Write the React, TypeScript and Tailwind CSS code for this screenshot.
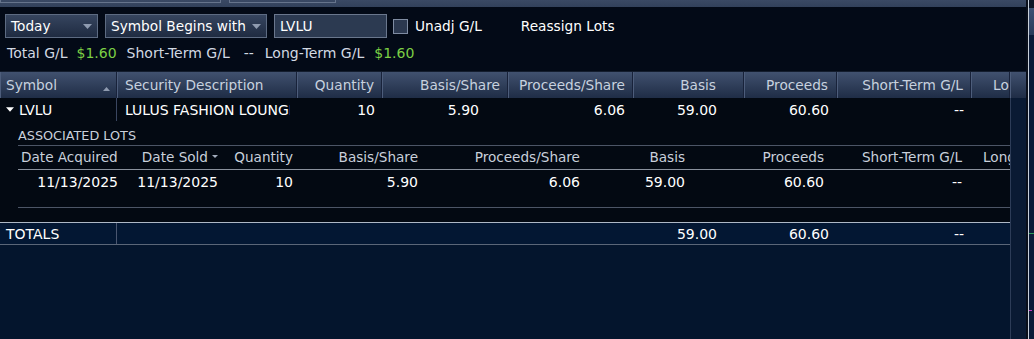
import React from "react";

type Col = { w: number; label: string; right?: boolean; pr?: number; pl?: number };

const mainCols: Col[] = [
  { w: 117, label: "Symbol", pl: 6 },
  { w: 180, label: "Security Description", pl: 8 },
  { w: 85, label: "Quantity", right: true, pr: 7 },
  { w: 126, label: "Basis/Share", right: true, pr: 7 },
  { w: 125, label: "Proceeds/Share", right: true, pr: 7 },
  { w: 111, label: "Basis", right: true, pr: 27 },
  { w: 93, label: "Proceeds", right: true, pr: 8 },
  { w: 134, label: "Short-Term G/L", right: true, pr: 7 },
  { w: 39, label: "Long-Term G/L", pl: 22 },
];

// main row values, with own right padding where the data sits off the header
const mainRow = [
  { w: 85, v: "10", pr: 7 },
  { w: 126, v: "5.90", pr: 29 },
  { w: 125, v: "6.06", pr: 8 },
  { w: 111, v: "59.00", pr: 27 },
  { w: 93, v: "60.60", pr: 8 },
  { w: 134, v: "--", pr: 7 },
];

// associated lots sub-table, starts at x 18
const lotCols = [
  { w: 107, label: "Date Acquired", value: "11/13/2025" },
  { w: 100, label: "Date Sold", value: "11/13/2025" },
  { w: 75, label: "Quantity", value: "10" },
  { w: 125, label: "Basis/Share", value: "5.90" },
  { w: 162, label: "Proceeds/Share", value: "6.06" },
  { w: 105, label: "Basis", value: "59.00" },
  { w: 139, label: "Proceeds", value: "60.60" },
  { w: 138, label: "Short-Term G/L", value: "--" },
];

function Caret({ className }: { className: string }) {
  return (
    <svg width="9" height="5" viewBox="0 0 9 5" className={className}>
      <path d="M0 0 L9 0 L4.5 5 Z" fill="currentColor" />
    </svg>
  );
}

function Dropdown({ label, w }: { label: string; w: number }) {
  return (
    <div
      className="h-[24px] flex items-center justify-between pl-[5px] pr-[5px] border border-[#5d6b82] bg-linear-to-b from-[#36455f] to-[#1f2b41] text-white"
      style={{ width: w }}
    >
      <span>{label}</span>
      <Caret className="text-[#8f9bb0]" />
    </div>
  );
}

export default function App() {
  return (
    <div
      className="w-[1034px] h-[339px] flex overflow-hidden bg-[#030a17] text-[14px] leading-[16px]"
      style={{ fontFamily: '"DejaVu Sans", Verdana, sans-serif' }}
    >
      <div className="w-[1026px] flex flex-col">
        {/* top toolbar strip */}
        <div className="h-[7px] flex gap-[8px] bg-linear-to-b from-[#3a4964] to-[#32415b]">
          <div className="w-[221px] h-[3px] border-x border-b border-[#66748c]" />
          <div className="w-[107px] h-[3px] border-x border-b border-[#66748c]" />
        </div>

        {/* filters */}
        <div className="mt-[7px] h-[24px] flex items-center pl-[5px] text-[13.7px]">
          <Dropdown label="Today" w={93} />
          <div className="w-[7px]" />
          <Dropdown label="Symbol Begins with" w={162} />
          <div className="ml-[7px] w-[113px] h-[24px] flex items-center pl-[5px] border border-[#6a778d] bg-[#2c3a51] text-white">
            LVLU
          </div>
          <div className="ml-[6px] w-[15px] h-[15px] border border-[#7f8ca2] bg-[#2b384f]" />
          <span className="ml-[7px] text-white">Unadj G/L</span>
          <span className="ml-[39px] text-white">Reassign Lots</span>
        </div>

        {/* summary */}
        <div className="mt-[6px] h-[18px] flex items-center pl-[7px] text-[#d2d9e3]">
          <span>Total G/L</span>
          <span className="ml-[9px] text-[#7ccf45]">$1.60</span>
          <span className="ml-[10px]">Short-Term G/L</span>
          <span className="ml-[14px]">--</span>
          <span className="ml-[11px]">Long-Term G/L</span>
          <span className="ml-[10px] text-[#7ccf45]">$1.60</span>
        </div>

        {/* header */}
        <div className="mt-[9px] h-[27px] flex border-t border-[#141d2e] bg-linear-to-b from-[#41516f] to-[#1f2d46] text-[#c7d1df] text-[13.7px]">
          {mainCols.map((c) => (
            <div
              key={c.label}
              className={`relative shrink-0 h-full flex items-center overflow-hidden whitespace-nowrap border-r border-[#18223a] shadow-[inset_1px_0_0_#4d5d7b] ${
                c.right ? "justify-end" : "justify-start"
              }`}
              style={{ width: c.w, paddingRight: c.pr ?? 0, paddingLeft: c.pl ?? 0 }}
            >
              {c.label}
              {c.label === "Symbol" && (
                <svg width="7" height="4" viewBox="0 0 7 4" className="absolute left-[103px] top-[15px] text-[#8f9bb0]">
                  <path d="M0 4 L7 4 L3.5 0 Z" fill="currentColor" />
                </svg>
              )}
            </div>
          ))}
          <div className="flex-1 shadow-[inset_1px_0_0_#4d5d7b]" />
        </div>

        {/* body */}
        <div className="flex-1 flex">
          <div className="w-[1010px] flex flex-col">
            <div className="bg-[#030912]">
              {/* LVLU row */}
              <div className="h-[23px] flex text-white">
                <div className="w-[117px] shrink-0 flex items-center pl-[6px] border-r border-[#3a4660]">
                  <Caret className="text-white mr-[5px] w-[8px]" />
                  <span>LVLU</span>
                </div>
                <div className="w-[180px] shrink-0 flex items-center pl-[8px] pr-[7px]">
                  <span className="overflow-hidden whitespace-nowrap">LULUS FASHION LOUNGE INC</span>
                </div>
                {mainRow.map((c, i) => (
                  <div
                    key={i}
                    className="shrink-0 flex items-center justify-end"
                    style={{ width: c.w, paddingRight: c.pr }}
                  >
                    {c.v}
                  </div>
                ))}
              </div>

              {/* associated lots */}
              <div className="ml-[18px]">
                <div className="h-[25px] pt-[7px] text-[12.8px] leading-[15px] text-[#c9d0db] border-b border-[#4c5566]">
                  ASSOCIATED LOTS
                </div>
                <div className="h-[24px] flex border-b border-[#8a919d] text-[#c9d0db] whitespace-nowrap text-[13.6px]">
                  {lotCols.map((c, i) => (
                    <div
                      key={c.label}
                      className={`shrink-0 flex items-center pb-[2px] ${i === 0 ? "justify-start pl-[3px]" : "justify-end pr-[7px]"}`}
                      style={{ width: c.w }}
                    >
                      {c.label}
                      {c.label === "Date Sold" && (
                        <svg width="6" height="3" viewBox="0 0 6 3" className="ml-[4px] text-[#a3adbd]">
                          <path d="M0 0 L6 0 L3 3 Z" fill="currentColor" />
                        </svg>
                      )}
                    </div>
                  ))}
                  <div className="flex-1 overflow-hidden flex items-center pb-[2px] pl-[14px]">Long-Term G/L</div>
                </div>
                <div className="h-[38px] flex border-b border-[#4c5566] text-white">
                  {lotCols.map((c) => (
                    <div
                      key={c.label}
                      className="shrink-0 h-[23px] flex items-center justify-end pr-[7px]"
                      style={{ width: c.w }}
                    >
                      {c.value}
                    </div>
                  ))}
                </div>
              </div>
              <div className="h-[14px]" />
            </div>

            {/* totals */}
            <div className="h-[23px] flex border-t border-b border-t-[#aeb8c6] border-b-[#5b6678] bg-[#031733] text-white">
              <div className="w-[117px] shrink-0 flex items-center pl-[6px] border-r border-[#4a5670]">TOTALS</div>
              <div className="w-[516px] shrink-0" />
              <div className="w-[111px] shrink-0 flex items-center justify-end pr-[27px]">59.00</div>
              <div className="w-[93px] shrink-0 flex items-center justify-end pr-[8px]">60.60</div>
              <div className="w-[134px] shrink-0 flex items-center justify-end pr-[7px]">--</div>
            </div>
            <div className="flex-1 bg-[#04152d]" />
          </div>
          {/* scrollbar track */}
          <div className="flex-1 bg-[#0a1a33] border-l border-[#2d3c57]" />
        </div>
      </div>

      <div className="w-[2px] bg-[#0a0f1a]" />
      <div className="w-[1px] bg-[#c9d1dc]" />
      {/* neighbouring panel edge */}
      <div className="flex-1 flex flex-col bg-[#0b1b38]">
        <div className="h-[8px] bg-[#0d1526]" />
        <div className="h-[27px] bg-linear-to-b from-[#3d5174] to-[#2a3b5a]" />
        <div className="h-[198px]" />
        <div className="h-[1px] bg-[#2f9a5a]" />
        <div className="h-[76px]" />
        <div className="h-[1px] w-[3px] bg-[#c03bc0]" />
      </div>
    </div>
  );
}
